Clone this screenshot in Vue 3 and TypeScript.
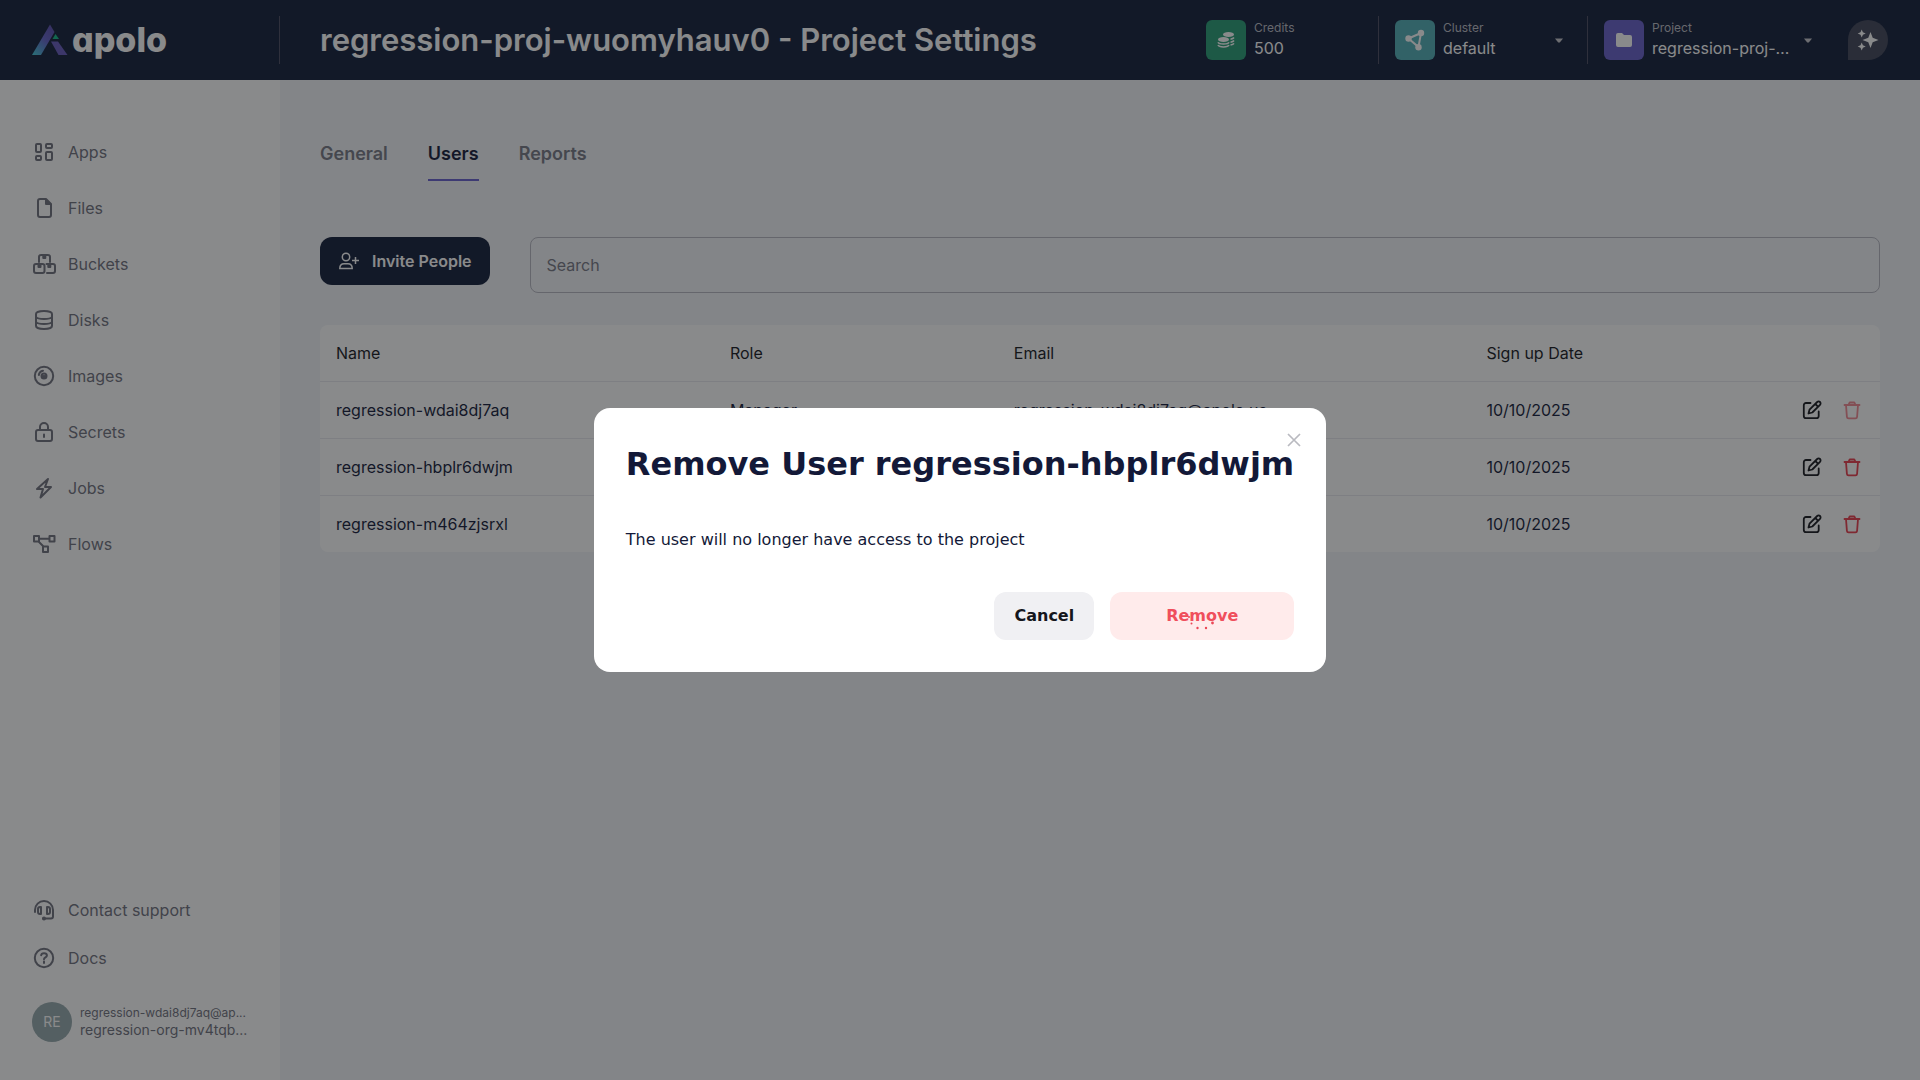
<script setup lang="ts">
import { ref } from 'vue'

interface NavItem { label: string; icon: string }
interface UserRow { name: string; role: string; email: string; date: string; locked: boolean }

const nav: NavItem[] = [
  { label: 'Apps', icon: 'M4 5a1 1 0 0 1 1-1h3a1 1 0 0 1 1 1v6a1 1 0 0 1-1 1H5a1 1 0 0 1-1-1zM14 5a1 1 0 0 1 1-1h4a1 1 0 0 1 1 1v2a1 1 0 0 1-1 1h-4a1 1 0 0 1-1-1zM4 17a1 1 0 0 1 1-1h3a1 1 0 0 1 1 1v2a1 1 0 0 1-1 1H5a1 1 0 0 1-1-1zM14 13a1 1 0 0 1 1-1h4a1 1 0 0 1 1 1v6a1 1 0 0 1-1 1h-4a1 1 0 0 1-1-1z' },
  { label: 'Files', icon: 'M6 5a2 2 0 0 1 2-2h6l5 5v11a2 2 0 0 1-2 2H8a2 2 0 0 1-2-2zM14 3v5h5zM15.5 6v1h1' },
  { label: 'Buckets', icon: 'M7 10V5a2 2 0 0 1 2-2h7a2 2 0 0 1 2 2v5M11.3 3v3h2V3M2 14a2 2 0 0 1 2-2h6.500a2 2 0 0 1 2 2v5a2 2 0 0 1-2 2H4a2 2 0 0 1-2-2zM6.500 12v3h2v-3M14.500 12H21a2 2 0 0 1 2 2v5a2 2 0 0 1-2 2h-6M16.300 12v3h2v-3' },
  { label: 'Disks', icon: 'M4 6c0-1.700 3.600-3 8-3s8 1.300 8 3v12c0 1.700-3.600 3-8 3s-8-1.300-8-3zM4 9c1 1.300 4.200 2 8 2s7-.7 8-2M4 14c1 1.300 4.200 2 8 2s7-.7 8-2' },
  { label: 'Images', icon: 'M2.800 12a9.200 9.200 0 1 0 18.400 0a9.200 9.200 0 1 0-18.400 0M9.500 12a2.500 2.500 0 1 0 5 0a2.500 2.500 0 1 0-5 0M11.500 12a.5.5 0 1 0 1 0M6.800 11c.3-2.200 2-3.900 4.200-4.300' },
  { label: 'Secrets', icon: 'M8 10V7a4 4 0 0 1 8 0v3M4 12a2 2 0 0 1 2-2h12a2 2 0 0 1 2 2v7a2 2 0 0 1-2 2H6a2 2 0 0 1-2-2zM12 14.500v2.500' },
  { label: 'Jobs', icon: 'M16 3L5 13h6L8.500 21.500L19 11h-6z' },
  { label: 'Flows', icon: 'M2 4h5v5.500H2zM17.500 4h5v5.500h-5zM11 14.500h5V20h-5zM7 6.700h10.500M6.500 9.500l5 5' },
]

const users: UserRow[] = [
  { name: 'regression-wdai8dj7aq', role: 'Manager', email: 'regression-wdai8dj7aq@apolo.us', date: '10/10/2025', locked: true },
  { name: 'regression-hbplr6dwjm', role: '', email: '', date: '10/10/2025', locked: false },
  { name: 'regression-m464zjsrxl', role: '', email: '', date: '10/10/2025', locked: false },
]

const tabs = ['General', 'Users', 'Reports']
const activeTab = ref('Users')
const search = ref('')
const dialogOpen = ref(true)
</script>

<template>
  <div class="app">
    <header class="header">
      <div class="brand">
        <a href="#" class="logo">
          <svg width="36" height="32" viewBox="0 0 36 32" aria-hidden="true">
            <defs>
              <linearGradient id="leg" x1="0" y1="1" x2="0.7" y2="0">
                <stop offset="0" stop-color="#3fc9d8" />
                <stop offset="0.6" stop-color="#6060c8" />
                <stop offset="1" stop-color="#5a4fb0" />
              </linearGradient>
            </defs>
            <path d="M0 31L18 0.500L22.500 8L9 31z" fill="url(#leg)" />
            <path d="M19 17.500h7L35.500 31H26.500z" fill="#6459bd" />
            <path d="M23.500 10L27 15H20.500z" fill="#12b886" />
          </svg>
          <span class="logo-name">apolo</span>
        </a>
      </div>
      <h1 class="title">regression-proj-wuomyhauv0 - Project Settings</h1>
      <div class="meta">
        <div class="block credits">
          <span class="tile green">
            <svg width="18" height="18" viewBox="0 0 18 18" aria-hidden="true">
              <g fill="#fff">
                <ellipse cx="11.500" cy="3.500" rx="5.500" ry="2.500" />
                <ellipse cx="6.500" cy="8.500" rx="5.500" ry="2.500" />
              </g>
              <path d="M1 11.200c1 2.400 10 2.400 11 0M1 14c1 2.500 10 2.500 11 0M13.500 8.200c1.700-.3 3-.9 3.500-1.700M13.500 11.200c1.700-.3 3-.9 3.500-1.700M13.500 14c1.700-.3 3-.9 3.500-1.700" fill="none" stroke="#fff" stroke-width="1.500" />
            </svg>
          </span>
          <div class="stack">
            <span class="caption">Credits</span>
            <span class="value">500</span>
          </div>
        </div>
        <div class="block cluster">
          <span class="tile teal">
            <svg width="20" height="22" viewBox="0 0 20 22" aria-hidden="true">
              <path d="M3.500 9.500L16 4L13.500 18z" fill="none" stroke="#fff" stroke-width="2" />
              <g fill="#fff"><circle cx="3.500" cy="9.500" r="3.200" /><circle cx="16" cy="4" r="3.200" /><circle cx="13.500" cy="18.300" r="3.200" /></g>
            </svg>
          </span>
          <div class="stack">
            <label class="caption" for="cluster">Cluster</label>
            <select id="cluster" class="value picker"><option>default</option></select>
          </div>
          <svg class="caret" width="8" height="5" viewBox="0 0 8 5" aria-hidden="true"><path d="M0 0.500h8L4.800 4.500H3.200z" fill="#c6c6cc" /></svg>
        </div>
        <div class="block project">
          <span class="tile violet">
            <svg width="16" height="14" viewBox="0 0 16 14" aria-hidden="true"><path d="M0 2a2 2 0 0 1 2-2h4l2 2h6a2 2 0 0 1 2 2v8a2 2 0 0 1-2 2H2a2 2 0 0 1-2-2z" fill="#fff" /></svg>
          </span>
          <div class="stack">
            <label class="caption" for="project">Project</label>
            <select id="project" class="value picker"><option>regression-proj-wuomyhauv0</option></select>
          </div>
          <svg class="caret" width="8" height="5" viewBox="0 0 8 5" aria-hidden="true"><path d="M0 0.500h8L4.800 4.500H3.200z" fill="#c6c6cc" /></svg>
        </div>
        <button class="assistant" type="button" aria-label="Assistant">
          <svg width="22" height="22" viewBox="0 0 22 22" aria-hidden="true">
            <path d="M13.500 3l2.200 5.800L21.500 11l-5.800 2.200L13.500 19l-2.200-5.800L5.500 11l5.800-2.200zM4.700 0.500l1.200 2.800L8.700 4.500L5.900 5.700L4.700 8.500L3.500 5.700L0.700 4.500L3.500 3.300zM4.700 13.500l1.200 2.800l2.800 1.200l-2.800 1.200l-1.200 2.800l-1.200-2.800l-2.800-1.200l2.800-1.200z" fill="#fff" />
          </svg>
        </button>
      </div>
    </header>

    <div class="body">
      <aside class="sidebar">
        <nav class="nav">
          <a v-for="item in nav" :key="item.label" href="#" class="nav-link">
            <svg width="24" height="24" viewBox="0 0 24 24" aria-hidden="true"><path :d="item.icon" /></svg>
            {{ item.label }}
          </a>
        </nav>
        <div class="bottom">
          <a href="#" class="nav-link">
            <svg width="24" height="24" viewBox="0 0 24 24" aria-hidden="true">
              <path d="M3 14v-2a9 9 0 0 1 18 0v6.500a2 2 0 0 1-2 2h-5M9 9H8a2 2 0 0 0-2 2v3a2 2 0 0 0 2 2h1zM15 9h1a2 2 0 0 1 2 2v3a2 2 0 0 1-2 2h-1zM11 20.500h2" /><circle cx="12" cy="20.500" r="1" />
            </svg>
            Contact support
          </a>
          <a href="#" class="nav-link">
            <svg width="24" height="24" viewBox="0 0 24 24" aria-hidden="true">
              <circle cx="12" cy="12" r="9.200" /><path d="M9.200 9.300c.1-1.400 1.200-2 2.800-2s2.900.8 2.900 2.200c0 1.800-2.900 2-2.900 3.800M12 15.500v1.500" />
            </svg>
            Docs
          </a>
          <div class="account">
            <span class="avatar">RE</span>
            <div class="account-text">
              <span class="account-mail">regression-wdai8dj7aq@ap...</span>
              <span class="account-org">regression-org-mv4tqb...</span>
            </div>
          </div>
        </div>
      </aside>

      <main class="main">
        <div class="tabs" role="tablist">
          <button v-for="tab in tabs" :key="tab" type="button" role="tab" class="tab" :class="{ active: tab === activeTab }" :aria-selected="tab === activeTab" @click="activeTab = tab">{{ tab }}</button>
        </div>
        <div class="toolbar">
          <button class="invite" type="button">
            <svg width="22" height="18" viewBox="0 0 22 18" fill="none" stroke="#fff" stroke-width="1.500" aria-hidden="true">
              <circle cx="8" cy="5" r="3.700" /><path d="M1.800 16.500c0-3 1.800-4.800 4.300-4.800h3.800c2.500 0 4.300 1.800 4.300 4.800zM17.500 5v7M14 8.500h7" />
            </svg>
            Invite People
          </button>
          <input v-model="search" class="search" type="text" placeholder="Search" aria-label="Search" />
        </div>
        <table class="table">
          <colgroup><col class="c-name" /><col class="c-role" /><col class="c-email" /><col /><col class="c-actions" /></colgroup>
          <thead>
            <tr><th>Name</th><th>Role</th><th>Email</th><th>Sign up Date</th><th></th></tr>
          </thead>
          <tbody>
            <tr v-for="user in users" :key="user.name">
              <td>{{ user.name }}</td>
              <td>{{ user.role }}</td>
              <td>{{ user.email }}</td>
              <td>{{ user.date }}</td>
              <td>
                <div class="actions">
                  <button type="button" class="icon-button" aria-label="Edit user">
                    <svg width="20" height="20" viewBox="0 0 20 20" fill="none" stroke="#15161c" stroke-width="1.800" stroke-linecap="round" stroke-linejoin="round" aria-hidden="true">
                      <path d="M8.500 3H4a2.200 2.200 0 0 0-2.200 2.200V16A2.200 2.200 0 0 0 4 18.200h10.500a2.200 2.200 0 0 0 2.200-2.200v-4.500M6.500 13.500l1-3.800l7.700-7.700a1.900 1.900 0 0 1 2.800 2.800L10.300 12.500zM13.300 4l2.700 2.700" />
                    </svg>
                  </button>
                  <button type="button" class="icon-button" :disabled="user.locked" aria-label="Remove user">
                    <svg width="20" height="20" viewBox="0 0 20 20" fill="none" stroke="#eb3c4c" stroke-width="1.800" stroke-linecap="round" stroke-linejoin="round" aria-hidden="true">
                      <path d="M2.500 5h15M4 5l.9 11.800a1.700 1.700 0 0 0 1.700 1.500h6.800a1.700 1.700 0 0 0 1.700-1.500L16 5M6.500 4.800l1.200-2.300h4.600l1.200 2.300" />
                    </svg>
                  </button>
                </div>
              </td>
            </tr>
          </tbody>
        </table>
      </main>
    </div>

    <div v-if="dialogOpen" class="overlay">
      <section class="dialog" role="dialog" aria-modal="true" aria-labelledby="dialog-title">
        <button class="close" type="button" aria-label="Close" @click="dialogOpen = false">
          <svg width="14" height="14" viewBox="0 0 14 14" aria-hidden="true"><path d="M1 1l12 12M13 1L1 13" stroke="#b9bac0" stroke-width="1.700" /></svg>
        </button>
        <h2 id="dialog-title" class="dialog-title">Remove User regression-hbplr6dwjm</h2>
        <p class="dialog-text">The user will no longer have access to the project</p>
        <div class="dialog-actions">
          <button class="cancel" type="button" @click="dialogOpen = false">Cancel</button>
          <button class="remove" type="button">
            Remove
            <svg class="spinner" width="32" height="32" viewBox="0 0 32 32" fill="#eb4856" aria-hidden="true">
              <circle cx="3" cy="17" r="1" /><circle cx="5.500" cy="23.500" r="1" /><circle cx="11.500" cy="28" r="1.200" /><circle cx="20" cy="28" r="1.200" /><circle cx="26.500" cy="23" r="1.400" />
            </svg>
          </button>
        </div>
      </section>
    </div>
  </div>
</template>

<style>
body { margin: 0; }
</style>

<style scoped>
*, *::before, *::after { box-sizing: border-box; }
.app { display: flex; flex-direction: column; min-height: 100vh; font-family: Inter, "Liberation Sans", sans-serif; font-size: 16px; line-height: 24px; color: #131938; background: #f3f4f8; }
button, input, select { font: inherit; color: inherit; border: 0; padding: 0; background: none; }
button { cursor: pointer; }
a { color: inherit; text-decoration: none; }

.header { display: flex; align-items: center; height: 80px; background: #111c38; color: #fff; }
.brand { display: flex; align-items: center; width: 280px; height: 48px; padding-left: 32px; border-right: 1px solid #4a4a60; }
.logo { display: flex; align-items: center; gap: 4px; }
.logo-name { font-size: 34px; font-weight: 800; line-height: 40px; font-feature-settings: "cv11"; }
.title { flex: 1; margin: 0; padding-left: 40px; font-size: 31px; font-weight: 600; line-height: 40px; white-space: nowrap; }
.meta { display: flex; align-items: center; }
.block { display: flex; align-items: center; height: 48px; gap: 8px; }
.credits { width: 173px; border-right: 1px solid #4a4a60; }
.cluster { width: 209px; padding: 0 24px 0 16px; border-right: 1px solid #4a4a60; }
.project { padding: 0 36px 0 16px; }
.tile { display: flex; align-items: center; justify-content: center; width: 40px; height: 40px; border-radius: 6px; flex: none; }
.green { background: #269c74; }
.teal { background: #50aeb6; }
.violet { background: #675ecb; }
.stack { display: flex; flex-direction: column; flex: 1; min-width: 0; }
.caption { font-size: 12px; line-height: 16px; color: #b9bac2; }
.value { font-size: 16px; line-height: 24px; }
.picker { appearance: none; width: 100%; height: 24px; outline: 0; text-overflow: ellipsis; overflow: hidden; white-space: nowrap; }
.project .stack { width: 140px; flex: none; }
.project .caret { margin-left: 4px; }
.caret { flex: none; }
.assistant { display: flex; align-items: center; justify-content: center; width: 40px; height: 40px; margin-right: 32px; border-radius: 20px 20px 20px 0; background: #404559; }

.body { display: flex; flex: 1; }
.sidebar { display: flex; flex-direction: column; justify-content: space-between; width: 280px; flex: none; padding: 52px 32px 38px; background: #fff; color: #6f707d; }
.nav { display: flex; flex-direction: column; gap: 16px; }
.nav-link { display: flex; align-items: center; gap: 12px; height: 40px; }
.nav-link svg { flex: none; fill: none; stroke: currentColor; stroke-width: 2; stroke-linecap: round; stroke-linejoin: round; overflow: visible; }
.bottom { display: flex; flex-direction: column; gap: 8px; }
.account { display: flex; align-items: center; gap: 8px; margin-top: 16px; }
.avatar { display: flex; align-items: center; justify-content: center; width: 40px; height: 40px; border-radius: 50%; flex: none; background: #95a8ac; color: #fff; font-size: 14px; }
.account-text { display: flex; flex-direction: column; white-space: nowrap; }
.account-mail { font-size: 12px; line-height: 16px; }
.account-org { font-size: 14px; line-height: 18px; }

.main { flex: 1; min-width: 0; padding: 56px 40px; }
.tabs { display: flex; gap: 40px; }
.tab { height: 45px; padding-bottom: 7px; border-bottom: 2px solid transparent; font-size: 18px; font-weight: 600; color: #777885; }
.tab.active { color: #131938; border-color: #675ecf; }
.toolbar { display: flex; align-items: flex-start; gap: 40px; margin: 56px 0 32px; }
.invite { display: flex; align-items: center; gap: 12px; height: 48px; padding: 0 18px; border-radius: 12px; background: #111c38; color: #fff; font-weight: 600; white-space: nowrap; }
.search { flex: 1; min-width: 0; height: 56px; padding: 0 16px; border: 1px solid #b6b7c1; border-radius: 8px; outline: 0; }
.search::placeholder { color: #777885; opacity: 1; }
.table { width: 100%; table-layout: fixed; border-collapse: separate; border-spacing: 0; border-radius: 8px; background: #fff; }
.c-name { width: 25.25%; }
.c-role { width: 18.2%; }
.c-email { width: 30.3%; }
.c-actions { width: 104px; }
th, td { height: 57px; padding: 0 16px; text-align: left; font-weight: 400; white-space: nowrap; border-bottom: 1px solid #e9e9ee; }
th { color: #15161c; }
tbody tr:last-child td { height: 56px; border-bottom: 0; }
.actions { display: flex; justify-content: flex-end; gap: 20px; padding-right: 2px; }
.icon-button { display: flex; width: 20px; height: 20px; }
.icon-button:disabled { opacity: 0.6; }

.overlay { position: fixed; inset: 0; display: flex; align-items: center; justify-content: center; background: rgba(19, 21, 23, 0.5); font-family: "DejaVu Sans", sans-serif; }
.dialog { position: relative; padding: 32px; border-radius: 16px; background: #fff; }
.close { position: absolute; top: 20px; right: 20px; display: flex; align-items: center; justify-content: center; width: 24px; height: 24px; }
.dialog-title { margin: 0 0 40px; font-size: 32px; font-weight: 700; line-height: 48px; }
.dialog-text { margin: 0 0 40px; font-size: 16px; line-height: 24px; }
.dialog-actions { display: flex; justify-content: flex-end; gap: 16px; }
.cancel, .remove { height: 48px; border-radius: 12px; font-weight: 700; }
.cancel { padding: 0 20px; background: #f0f0f3; color: #15161c; }
.remove { position: relative; width: 184px; background: #ffebeb; color: #f04f5c; }
.spinner { position: absolute; inset: 8px 0 0 0; margin: 0 auto; }
</style>
